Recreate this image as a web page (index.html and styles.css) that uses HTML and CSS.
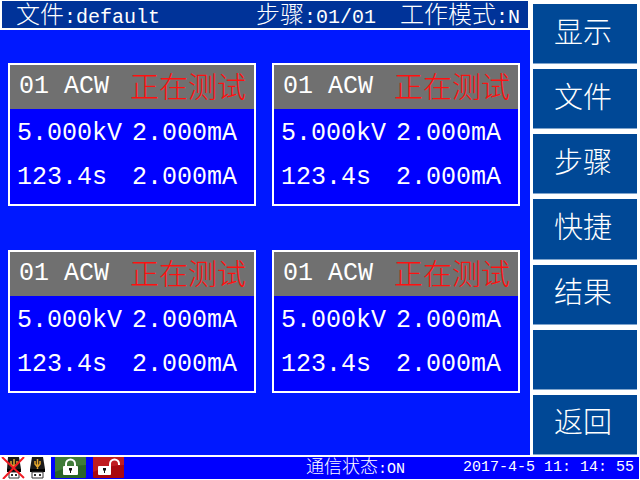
FILE: index.html
```html
<!DOCTYPE html>
<html lang="zh-CN">
<head>
<meta charset="utf-8">
<title>default</title>
<link rel="stylesheet" href="styles.css">
</head>
<body>
<div class="screen">
  <main class="work">
    <header class="topbar">
      <span class="file"><span class="cjk">文件</span>:default</span>
      <span class="step"><span class="cjk">步骤</span>:01/01</span>
      <span class="mode"><span class="cjk">工作模式</span>:N</span>
    </header>
    <div class="channels">
      <section class="channel">
        <h2 class="channel-head"><span>01 ACW</span><span class="state">正在测试</span></h2>
        <div class="readings"><span>5.000kV</span><span>2.000mA</span><span>123.4s</span><span>2.000mA</span></div>
      </section>
      <section class="channel">
        <h2 class="channel-head"><span>01 ACW</span><span class="state">正在测试</span></h2>
        <div class="readings"><span>5.000kV</span><span>2.000mA</span><span>123.4s</span><span>2.000mA</span></div>
      </section>
      <section class="channel">
        <h2 class="channel-head"><span>01 ACW</span><span class="state">正在测试</span></h2>
        <div class="readings"><span>5.000kV</span><span>2.000mA</span><span>123.4s</span><span>2.000mA</span></div>
      </section>
      <section class="channel">
        <h2 class="channel-head"><span>01 ACW</span><span class="state">正在测试</span></h2>
        <div class="readings"><span>5.000kV</span><span>2.000mA</span><span>123.4s</span><span>2.000mA</span></div>
      </section>
    </div>
  </main>
  <nav class="menu">
    <button type="button">显示</button>
    <button type="button">文件</button>
    <button type="button">步骤</button>
    <button type="button">快捷</button>
    <button type="button">结果</button>
    <button type="button"></button>
    <button type="button">返回</button>
  </nav>
  <footer class="status">
    <div class="usb">
      <svg width="25" height="22" viewBox="0 0 25 22">
        <path d="M8 0h11l2 12v3H7v-3z" fill="#1a1a1a"/><path d="M7 12h14v3H7z" fill="#000"/>
        <path d="M9 15h10v6H9z" fill="#fff" stroke="#333"/><path d="M11 17h2v2h-2zM15 17h2v2h-2z" fill="#333"/>
        <path d="M14 12V2M11 4v3l3 3 3-3V4" fill="none" stroke="#e5a72c" stroke-width="1.5"/>
        <path d="M2 0l22 21M24 0L3 22" stroke="#f01c24" stroke-width="2"/>
      </svg>
      <svg width="25" height="22" viewBox="0 0 25 22">
        <path d="M7 0h11l2 12v3H5v-3z" fill="#1a1a1a"/><path d="M5 12h15v3H5z" fill="#000"/>
        <path d="M7 15h11v6H7z" fill="#fff" stroke="#333"/><path d="M9 17h2v2h-2zM14 17h2v2h-2z" fill="#333"/>
        <path d="M12.5 12V2M10 4v3l2.500 3 2.500-3V4" fill="none" stroke="#e5a72c" stroke-width="1.5"/>
      </svg>
    </div>
    <div class="locks">
      <svg width="31" height="21" viewBox="0 0 31 21">
        <rect width="31" height="21" rx="1" fill="#2a6428"/><path d="M0 0h31v8Q16 8 0 15z" fill="#407b39"/>
        <path d="M11 10V7a4.5 4.5 0 0 1 9 0v3" fill="none" stroke="#fff" stroke-width="2"/><rect x="8" y="9" width="15" height="9" rx="1" fill="#fff"/><path d="M14 11h3v2l-1 1v2h-1v-2l-1-1z" fill="#111"/>
      </svg>
      <svg width="31" height="21" viewBox="0 0 31 21">
        <rect width="31" height="21" rx="1" fill="#a8080e"/><path d="M0 0h31v8Q16 8 0 15z" fill="#c01c20"/>
        <path d="M17 10V7a4.5 4.5 0 0 1 9 0v1" fill="none" stroke="#fff" stroke-width="2"/><rect x="5" y="9" width="13" height="9" rx="1" fill="#fff"/><path d="M10 11h3v2l-1 1v2h-1v-2l-1-1z" fill="#111"/>
      </svg>
    </div>
    <span class="link"><span class="cjk">通信状态</span>:ON</span>
    <time class="clock">2017-4-5 11: 14: 55</time>
  </footer>
</div>
</body>
</html>
```
FILE: styles.css
```css
* { box-sizing: border-box; }
body {
  margin: 0;
  background: #fff;
  color: #fff;
  font-family: "Liberation Mono", "Noto Sans CJK SC", monospace;
  font-weight: 300;
}
.screen {
  display: grid;
  grid-template-columns: 1fr 104px;
  grid-template-rows: 1fr 22px;
  gap: 2px 3px;
  height: 100vh;
  padding: 0 3px 1px 0;
}
.work { display: flex; flex-direction: column; }
.topbar {
  display: flex;
  height: 27px;
  margin: 1px 2px 2px;
  padding: 0 8px 0 14px;
  background: #003399;
  font-size: 20px;
  line-height: 32px;
  white-space: nowrap;
}
.topbar .cjk { font-size: 24px; }
.step { margin-left: auto; }
.mode { margin-left: 24px; }
.channels {
  flex: 1;
  display: grid;
  grid-template-columns: 1fr 1fr;
  align-content: start;
  gap: 44px 16px;
  padding: 33px 10px 0 8px;
  background: #0018ff;
}
.channel { border: 2px solid #fff; background: #0000ff; white-space: nowrap; }
.channel-head {
  display: flex;
  justify-content: space-between;
  height: 44px;
  margin: 0;
  padding: 0 8px 0 9px;
  background: #707070;
  font-size: 25px;
  font-weight: 300;
  line-height: 44px;
}
.state {
  color: #ff1010;
  font-family: "Noto Sans CJK SC", sans-serif;
  font-size: 29px;
  line-height: 40px;
}
.readings {
  display: grid;
  grid-template-columns: 1fr 105px;
  padding: 3px 17px 4px 7px;
  font-size: 25px;
  line-height: 44px;
}
.menu { display: flex; flex-direction: column; gap: 5px; padding-top: 4px; }
.menu button {
  flex: 1;
  padding: 0 4px 8px 0;
  border: 0;
  border-bottom: 1px solid #7fa4cc;
  background: #004896;
  color: #fff;
  font-family: "Noto Sans CJK SC", sans-serif;
  font-size: 29px;
  font-weight: 300;
  line-height: 40px;
}
.status {
  grid-column: 1 / -1;
  display: flex;
  margin-right: -2px;
  background: #0000ff;
  font-size: 15px;
  line-height: 22px;
  white-space: nowrap;
}
.status .cjk { font-size: 18px; }
.status svg { display: block; }
.usb { display: flex; width: 51px; background: #fff; }
.locks { display: flex; gap: 7px; padding-left: 4px; }
.link { margin-left: auto; }
.clock { margin-left: 58px; padding-right: 5px; }
```
